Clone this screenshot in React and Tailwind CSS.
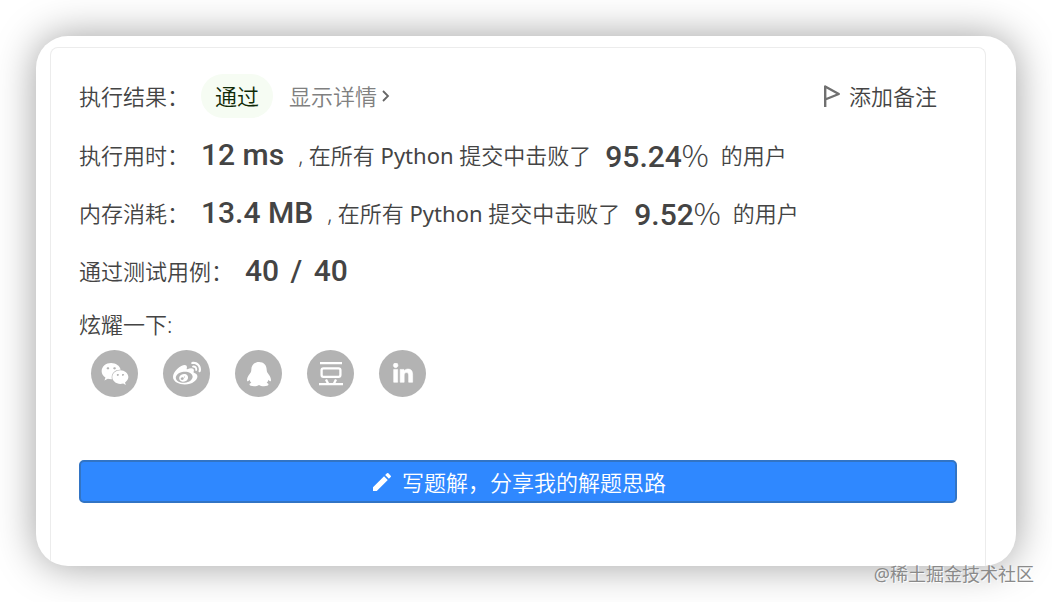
import { FaWeixin, FaWeibo, FaLinkedinIn } from 'react-icons/fa'
import { MdEdit } from 'react-icons/md'

function QqIcon() {
  return (
    <svg viewBox="0 0 28 28" className="size-7" fill="currentColor" aria-hidden="true">
      <path d="M14 2C9.300 2 6.300 5.300 6.300 9.800c0 1-.1 1.700-.5 2.500C4 14.700 2 17.600 2 20c0 1.300.6 1.700 1.300 1 .5-.4.900-.9 1.200-1.300.4 1.200.9 2.200 1.800 3.100-1.200.5-1.800 1.100-1.800 1.800 0 1.300 2 1.700 4.500 1.700 2.200 0 3.800-.5 5-1.300 1.200.8 2.800 1.300 5 1.300 2.500 0 4.500-.4 4.500-1.700 0-.7-.6-1.300-1.800-1.800.9-.9 1.400-1.900 1.800-3.100.3.4.7.9 1.200 1.300.7.7 1.300.3 1.300-1 0-2.400-2-5.300-3.800-7.700-.4-.8-.5-1.500-.5-2.500C21.700 5.300 18.700 2 14 2z" />
    </svg>
  )
}

function DoubanIcon() {
  return (
    <svg viewBox="0 0 28 28" className="size-7" fill="none" stroke="currentColor" strokeWidth="2.300" aria-hidden="true">
      <path d="M3 3.200h22M2 24.200h24M9 19.500l2 4M19 19.500l-2 4" />
      <rect x="4.600" y="8.300" width="18.800" height="8.600" rx="1.800" />
    </svg>
  )
}

const SHARES = [
  { label: '微信', icon: <FaWeixin size={28} /> },
  { label: '微博', icon: <FaWeibo size={28} /> },
  { label: 'QQ', icon: <QqIcon /> },
  { label: '豆瓣', icon: <DoubanIcon /> },
  { label: 'LinkedIn', icon: <FaLinkedinIn size={22} stroke="currentColor" strokeWidth={14} /> },
]

const STATS = [
  { label: '执行用时：', value: '12 ms', percent: '95.24' },
  { label: '内存消耗：', value: '13.4 MB', percent: '9.52' },
]

function Big({ children }) {
  return <span className="text-[30px] font-medium text-[#444] font-[Roboto,sans-serif]">{children}</span>
}

export default function App() {
  return (
    <div className="relative bg-white p-9 text-[#444] text-[22px] leading-8 font-[350] whitespace-nowrap font-['Noto_Sans','Noto_Sans_CJK_SC',sans-serif]">
      <main className="rounded-[32px] bg-white overflow-hidden pt-[11px] pl-[14px] pr-[30px] shadow-[0_0_40px_rgba(0,0,0,0.38)]">
        <section className="rounded-t-lg border border-b-0 border-[#ececec] px-7 pt-[26px] pb-[63px]">
          <div className="flex items-center">
            <span>执行结果：</span>
            <span className="ml-3 rounded-full bg-[#f6fcf3] px-[14px] py-[6px] text-[#102a06]">通过</span>
            <button className="ml-4 flex items-center gap-1 text-[#808080]">
              显示详情
              <svg viewBox="0 0 12 14" className="w-3 h-[14px]" fill="none" stroke="#666" strokeWidth="1.800" aria-hidden="true">
                <path d="M2 2l5 5-5 5" />
              </svg>
            </button>
            <button className="ml-auto mr-5 flex items-center gap-2">
              <svg viewBox="0 0 18 22" className="w-[18px] h-[22px]" fill="none" stroke="#707070" strokeWidth="2.400" strokeLinejoin="round" aria-hidden="true">
                <path d="M2.200 22V1.500L15.800 9 2.200 14.500" />
              </svg>
              添加备注
            </button>
          </div>

          <div className="mt-2">
            {STATS.map(({ label, value, percent }) => (
              <p key={label} className="flex items-center h-[58px]">
                <span className="mr-3">{label}</span>
                <Big>{value}</Big>
                <span className="mx-[14px]">, 在所有 <span className="font-normal">Python</span> 提交中击败了</span>
                <Big>{percent}<span className="font-light font-['Noto_Sans_CJK_SC',sans-serif]">%</span></Big>
                <span className="ml-3">的用户</span>
              </p>
            ))}
            <p className="flex items-center h-[58px]">
              <span className="mr-3">通过测试用例：</span>
              <Big>40 <span className="mx-1">/</span> 40</Big>
            </p>
          </div>

          <p className="mt-2">炫耀一下:</p>
          <div className="mt-[10px] ml-3 flex gap-[25px]">
            {SHARES.map(({ label, icon }) => (
              <button
                key={label}
                aria-label={label}
                className="size-[47px] rounded-full bg-[#b3b3b3] text-white flex items-center justify-center"
              >
                {icon}
              </button>
            ))}
          </div>

          <button className="mt-[63px] w-full h-[43px] rounded-[5px] border-2 border-[#3274c4] bg-[#2f88ff] text-white flex items-center justify-center gap-2">
            <MdEdit size={24} />
            写题解，分享我的解题思路
          </button>
        </section>
      </main>
      <span className="absolute right-[18px] bottom-[14px] text-lg font-normal text-[#8a8a8a] [text-shadow:1px_1px_1px_white]">@稀土掘金技术社区</span>
    </div>
  )
}
